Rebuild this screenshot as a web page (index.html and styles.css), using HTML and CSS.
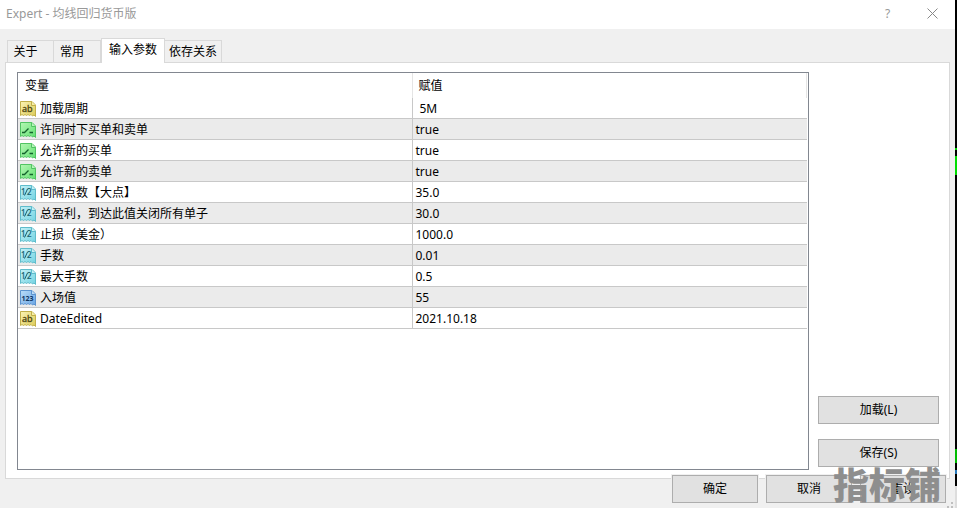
FILE: index.html
```html
<!DOCTYPE html>
<html lang="zh-CN">
<head>
<meta charset="utf-8">
<title>Expert - 均线回归货币版</title>
<link rel="stylesheet" href="styles.css">
</head>
<body>
<svg class="defs" aria-hidden="true">
  <defs>
    <linearGradient id="gy" x2="1" y2="1"><stop offset="0" stop-color="#fbf3b4"/><stop offset="1" stop-color="#dccb58"/></linearGradient>
    <linearGradient id="gg" x2="1" y2="1"><stop offset="0" stop-color="#b5f7b4"/><stop offset="1" stop-color="#62e072"/></linearGradient>
    <linearGradient id="gc" x2="1" y2="1"><stop offset="0" stop-color="#c3f0f6"/><stop offset="1" stop-color="#72d3e2"/></linearGradient>
    <linearGradient id="gb" x2="1" y2="1"><stop offset="0" stop-color="#b9dcf8"/><stop offset="1" stop-color="#6aa5e4"/></linearGradient>
    <path id="sheet" d="M.5.5H12L15.5 4V15.500L14 14L12.500 15L11 13.500L9.500 14.500L8 13.500L6.500 14.500L5 13.500L3.500 14.500L2 13.500L.5 14.500Z"/>
    <path id="fold" d="M11.500 .5V4.500H15.500"/>
    <symbol id="text" viewBox="0 0 16 16">
      <use href="#sheet" fill="url(#gy)" stroke="#c2b04a"/><use href="#fold" fill="#f7efaa" stroke="#c2b04a"/>
      <text x="2" y="11" font-size="9" fill="#4c4510" stroke="#4c4510" stroke-width=".3">ab</text>
    </symbol>
    <symbol id="bool" viewBox="0 0 16 16">
      <use href="#sheet" fill="url(#gg)" stroke="#52c463"/><use href="#fold" fill="#b8f4bc" stroke="#52c463"/>
      <path d="M2 10.500H4.500L8.500 6.500M9.500 10.500H13" fill="none" stroke="#14622c" stroke-width="1.300"/>
    </symbol>
    <symbol id="real" viewBox="0 0 16 16">
      <use href="#sheet" fill="url(#gc)" stroke="#5fbccb"/><use href="#fold" fill="#c6f0f5" stroke="#5fbccb"/>
      <g fill="#155c6b" stroke="#155c6b" stroke-width=".2" font-size="8"><text x="1" y="10">1</text><text x="7" y="10">2</text></g>
      <path d="M4.500 10.500L7.500 4" fill="none" stroke="#155c6b"/>
    </symbol>
    <symbol id="int" viewBox="0 0 16 16">
      <use href="#sheet" fill="url(#gb)" stroke="#5c93cf"/><use href="#fold" fill="#bedcf6" stroke="#5c93cf"/>
      <text x="1.500" y="11" font-size="7" font-weight="bold" fill="#103460">123</text>
    </symbol>
  </defs>
</svg>
<div class="screen">
  <main class="dialog">
    <header class="titlebar">
      <h1>Expert - 均线回归货币版</h1>
      <button class="caption help" aria-label="帮助">?</button>
      <button class="caption" aria-label="关闭"><svg width="11" height="11" viewBox="0 0 11 11"><path d="M.5.5l10 10M10.500.5l-10 10" stroke="#888" fill="none"/></svg></button>
    </header>
    <nav class="tabs" role="tablist">
      <button role="tab" class="tab short">关于</button>
      <button role="tab" class="tab short">常用</button>
      <button role="tab" class="tab active" aria-selected="true">输入参数</button>
      <button role="tab" class="tab">依存关系</button>
    </nav>
    <section class="panel">
      <div class="list">
        <table>
          <thead><tr><th>变量</th><th>赋值</th></tr></thead>
          <tbody>
            <tr><td><span class="name"><svg><use href="#text"/></svg>加载周期</span></td><td class="spaced">5M</td></tr>
            <tr><td><span class="name"><svg><use href="#bool"/></svg>许同时下买单和卖单</span></td><td>true</td></tr>
            <tr><td><span class="name"><svg><use href="#bool"/></svg>允许新的买单</span></td><td>true</td></tr>
            <tr><td><span class="name"><svg><use href="#bool"/></svg>允许新的卖单</span></td><td>true</td></tr>
            <tr><td><span class="name"><svg><use href="#real"/></svg>间隔点数【大点】</span></td><td>35.0</td></tr>
            <tr><td><span class="name"><svg><use href="#real"/></svg>总盈利，到达此值关闭所有单子</span></td><td>30.0</td></tr>
            <tr><td><span class="name"><svg><use href="#real"/></svg>止损（美金）</span></td><td>1000.0</td></tr>
            <tr><td><span class="name"><svg><use href="#real"/></svg>手数</span></td><td>0.01</td></tr>
            <tr><td><span class="name"><svg><use href="#real"/></svg>最大手数</span></td><td>0.5</td></tr>
            <tr><td><span class="name"><svg><use href="#int"/></svg>入场值</span></td><td>55</td></tr>
            <tr><td><span class="name"><svg><use href="#text"/></svg>DateEdited</span></td><td>2021.10.18</td></tr>
          </tbody>
        </table>
      </div>
      <div class="side">
        <button class="push">加载(L)</button>
        <button class="push">保存(S)</button>
      </div>
    </section>
    <footer class="actions">
      <button class="push">确定</button>
      <button class="push">取消</button>
      <button class="push">重设</button>
    </footer>
    <div class="watermark">指标铺</div>
    <svg class="grip" width="6" height="6" viewBox="0 0 6 6"><path d="M4 0h2v2h-2zM4 4h2v2h-2zM0 4h2v2h-2z" fill="#bfbfbf"/></svg>
  </main>
  <aside class="backdrop"></aside>
</div>
</body>
</html>
```
FILE: styles.css
```css
* { box-sizing: border-box; }

body {
  margin: 0;
  background: #f0f0f0;
  color: #000;
  font: 12px/16px "Noto Sans", "Noto Sans CJK SC", sans-serif;
}

button { font: inherit; color: inherit; padding: 0; }

.defs { position: absolute; width: 0; height: 0; }

.screen { display: flex; height: 100vh; }

.dialog {
  position: relative;
  flex: 1;
  display: flex;
  flex-direction: column;
}

.backdrop {
  width: 2px;
  background: linear-gradient(#000 148px, #0d0 148px, #0d0 150px, #000 150px, #000 156px, #0d0 156px, #0d0 175px, #000 175px, #000 449px, #0b0 449px, #0b0 463px, #000 463px, #000 470px, #2878b8 470px, #2878b8 474px, #000 474px, #000 486px, #ddd 486px);
}

.titlebar {
  display: flex;
  align-items: center;
  height: 29px;
  padding: 0 0 2px 6px;
  background: #fff;
  color: #999;
}

h1 { flex: 1; margin: 0; font-size: 12px; font-weight: 400; }

.caption {
  display: flex;
  align-items: center;
  justify-content: center;
  width: 45px;
  height: 26px;
  border: 0;
  background: none;
}

.help { font-size: 12px; }

.tabs {
  display: flex;
  align-items: flex-end;
  height: 33px;
  padding-left: 7px;
}

.tab {
  height: 22px;
  padding: 0 4px;
  border: 1px solid #d9d9d9;
  border-width: 1px 1px 0 0;
  background: #f0f0f0;
}

.tab:first-child { border-left-width: 1px; }

.short { width: 47px; padding: 0 12px 0 2px; }

.active {
  position: relative;
  height: 25px;
  margin-bottom: -1px;
  padding: 0 7px 3px;
  border-left-width: 1px;
  background: #fff;
}

.panel {
  flex: 1;
  display: flex;
  gap: 9px;
  margin: 0 5px;
  padding: 9px 10px 8px 11px;
  border: 1px solid #d9d9d9;
  background: #fff;
}

.list {
  flex: 1;
  padding-right: 1px;
  border: 1px solid #828790;
}

table {
  width: 100%;
  table-layout: fixed;
  border-collapse: separate;
  border-spacing: 0;
}

th {
  height: 25px;
  padding: 0 7px;
  border-right: 1px solid #e5e5e5;
  font-weight: 400;
  text-align: left;
}

th:last-child { padding-left: 6px; }

td {
  height: 21px;
  padding: 2px 3px 0;
  border-bottom: 1px solid #c8c8c8;
}

td:first-child {
  padding-left: 2px;
  border-right: 1px solid #c8c8c8;
}

.spaced { padding-left: 7px; }

tbody tr:nth-child(even) { background: #ebebeb; }

.name { display: flex; align-items: center; gap: 4px; }

.name svg { width: 16px; height: 16px; font-family: "Noto Sans", sans-serif; }

.side {
  display: flex;
  flex-direction: column;
  justify-content: flex-end;
  gap: 15px;
  width: 121px;
  padding-bottom: 3px;
}

.push {
  height: 28px;
  border: 1px solid #adadad;
  background: #e1e1e1;
}

.actions {
  position: relative;
  display: flex;
  justify-content: flex-end;
  gap: 8px;
  margin-top: -4px;
  padding: 0 9px 5px;
}

.actions .push { width: 86px; outline: 1px solid #f0f0f0; }

.watermark {
  position: absolute;
  right: 14px;
  bottom: 7px;
  color: #8e8e8e;
  font: 900 36px/36px "Noto Sans CJK SC", sans-serif;
}

.grip { position: absolute; right: 2px; bottom: 0; }
```
